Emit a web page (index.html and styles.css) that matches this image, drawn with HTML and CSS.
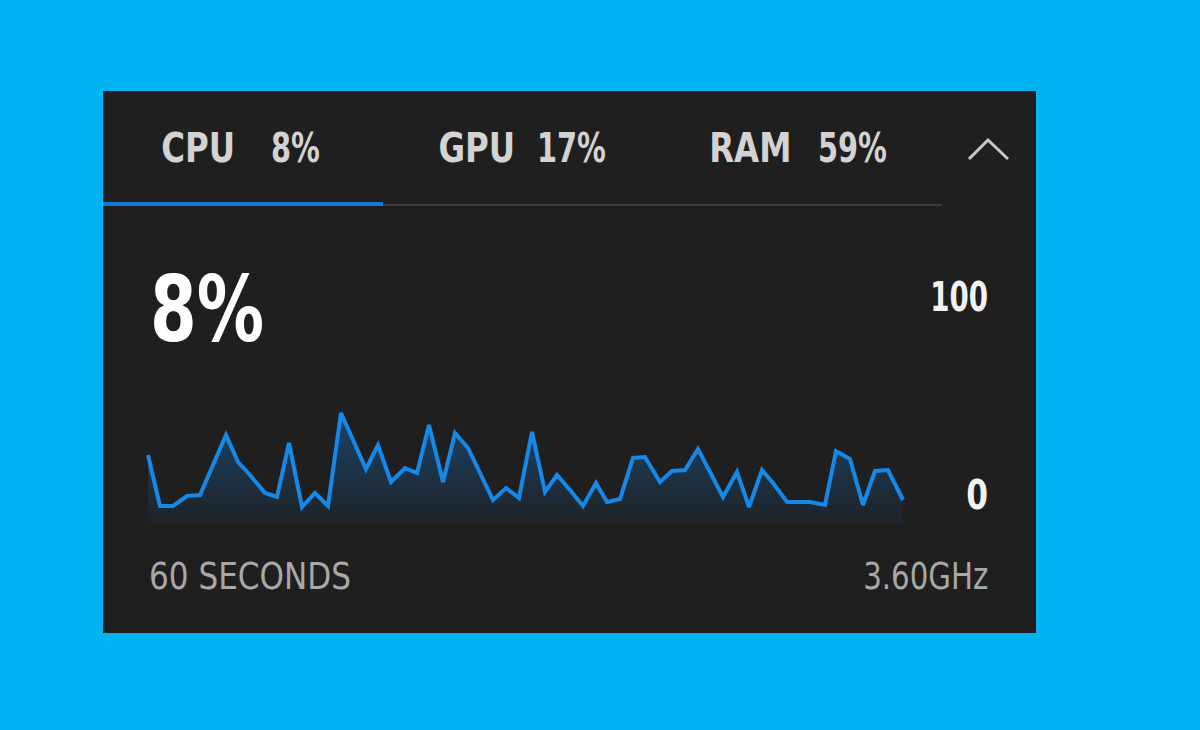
FILE: index.html
```html
<!DOCTYPE html>
<html lang="en">
<head>
<meta charset="utf-8">
<title>Performance</title>
<link rel="stylesheet" href="styles.css">
</head>
<body>
<div class="panel">
  <div class="header">
    <div class="tabs">
      <div class="tab active"><span class="tab-label">CPU</span><span class="tab-value wide">8%</span></div>
      <div class="tab gpu"><span class="tab-label">GPU</span><span class="tab-value">17%</span></div>
      <div class="tab"><span class="tab-label">RAM</span><span class="tab-value">59%</span></div>
    </div>
    <div class="collapse">
      <svg class="chevron" width="44" height="26" viewBox="0 0 44 26"><polyline points="2,22 21,3 41,22" fill="none" stroke="#c9c9c9" stroke-width="3"/></svg>
    </div>
  </div>
  <div class="content">
    <div class="main">
      <div class="big"><span class="big-text">8%</span></div>
      <div class="axis-max"><span class="axis-text narrow">100</span></div>
      <svg class="chart" width="760" height="120" viewBox="0 0 760 120">
        <defs>
          <linearGradient id="fillGrad" gradientUnits="userSpaceOnUse" x1="0" y1="0" x2="0" y2="118">
            <stop offset="0" stop-color="#1478d4" stop-opacity="0.45"/>
            <stop offset="1" stop-color="#1478d4" stop-opacity="0.04"/>
          </linearGradient>
        </defs>
        <polygon fill="url(#fillGrad)" points="2,118 2,50 14,101 27,101 41,91 54,90 80,30 92,57 104,70 119,88 131,92 143,38 156,102 169,88 182,101 195,8 220,64 232,40 245,77 259,63 271,68 283,20 297,77 309,28 322,43 347,95 360,83 373,93 386,27 399,87 411,70 424,85 437,101 450,78 461,97 474,94 487,53 499,52 514,77 526,66 539,65 552,44 577,92 591,67 603,102 616,65 627,78 641,97 664,97 679,100 690,46 704,54 717,100 729,66 742,65 757,95 757,118"/>
        <polyline fill="none" stroke="#1689e8" stroke-width="4" stroke-linejoin="miter" stroke-miterlimit="3" points="2,50 14,101 27,101 41,91 54,90 80,30 92,57 104,70 119,88 131,92 143,38 156,102 169,88 182,101 195,8 220,64 232,40 245,77 259,63 271,68 283,20 297,77 309,28 322,43 347,95 360,83 373,93 386,27 399,87 411,70 424,85 437,101 450,78 461,97 474,94 487,53 499,52 514,77 526,66 539,65 552,44 577,92 591,67 603,102 616,65 627,78 641,97 664,97 679,100 690,46 704,54 717,100 729,66 742,65 757,95"/>
      </svg>
      <div class="axis-min"><span class="axis-text">0</span></div>
    </div>
    <div class="footer">
      <span class="foot-left">60 SECONDS</span>
      <span class="foot-right">3.60GHz</span>
    </div>
  </div>
</div>
</body>
</html>
```
FILE: styles.css
```css
html, body {
  margin: 0;
  padding: 0;
}
body {
  background: #00b3f3;
  width: 1200px;
  height: 730px;
  overflow: hidden;
  font-family: "DejaVu Sans Condensed", "DejaVu Sans", sans-serif;
  font-stretch: condensed;
}
.panel {
  margin: 91px 0 0 103px;
  width: 933px;
  height: 542px;
  background: #1f1f1f;
  display: flex;
  flex-direction: column;
}
.header {
  display: flex;
  height: 115px;
}
.tabs {
  display: flex;
  width: 839px;
}
.tab {
  flex: 0 0 calc(100% / 3);
  display: flex;
  align-items: center;
  justify-content: center;
  box-sizing: border-box;
  border-bottom: 2px solid #3c3c3c;
  color: #d3d3d3;
  font-size: 40px;
  line-height: 40px;
  font-weight: 700;
}
.tab.active {
  border-bottom: 4px solid #1478d4;
  padding-top: 2px;
}
.tab.gpu {
  padding-left: 8px;
}
.tab-label {
  display: inline-block;
  transform: scaleX(0.9);
  transform-origin: right center;
}
.tab-value {
  display: inline-block;
  margin-left: 26px;
  transform: scaleX(0.8);
  transform-origin: left center;
}
.tab.gpu .tab-value {
  margin-left: 22px;
}
.tab-value.wide {
  margin-left: 36px;
}
.collapse {
  flex: 1;
  display: flex;
  justify-content: center;
  align-items: flex-start;
  padding-top: 46px;
}
.chevron {
  display: block;
}
.content {
  flex: 1;
  display: flex;
  flex-direction: column;
  padding: 0 48px 0 43px;
}
.main {
  display: grid;
  grid-template-columns: 1fr auto;
  margin-top: 59px;
}
.big {
  grid-column: 1;
  grid-row: 1;
  color: #ffffff;
  font-size: 90px;
  line-height: 90px;
  font-weight: 700;
  padding-left: 4px;
}
.big-text {
  display: inline-block;
  transform: scaleX(0.83);
  transform-origin: left center;
}
.axis-max, .axis-min {
  grid-column: 2;
  color: #f2f2f2;
  font-size: 40px;
  line-height: 40px;
  font-weight: 700;
  text-align: right;
}
.axis-text {
  display: inline-block;
  transform: scaleX(0.87);
  transform-origin: right center;
}
.axis-text.narrow {
  transform: scaleX(0.77);
}
.axis-max {
  grid-row: 1;
  align-self: start;
  margin-top: 12px;
}
.chart {
  grid-column: 1;
  grid-row: 2;
  display: block;
  margin-top: 50px;
}
.axis-min {
  grid-row: 2;
  align-self: end;
  margin-bottom: 10px;
}
.footer {
  display: flex;
  justify-content: space-between;
  margin-top: 32px;
  color: #a8a8a8;
  font-size: 38px;
  line-height: 38px;
  padding-left: 3px;
}
.foot-left {
  display: inline-block;
  transform: scaleX(0.91);
  transform-origin: left center;
}
.foot-right {
  display: inline-block;
  transform: scaleX(0.855);
  transform-origin: right center;
}
```
